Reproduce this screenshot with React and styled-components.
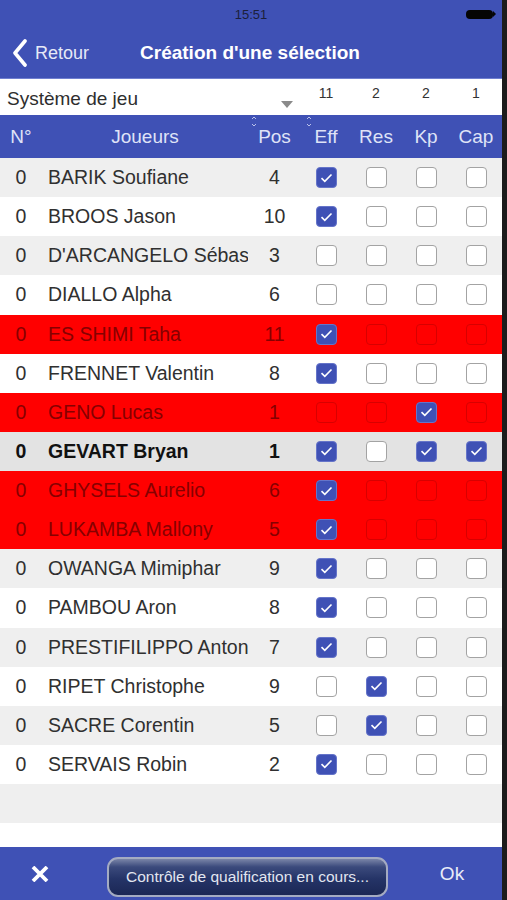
import React from 'react';
import styled, { createGlobalStyle, css } from 'styled-components';

const BLUE = '#3f51b5';

const players = [
  { name: 'BARIK Soufiane', pos: 4, checks: [1, 0, 0, 0] },
  { name: 'BROOS Jason', pos: 10, checks: [1, 0, 0, 0] },
  { name: "D'ARCANGELO Sébastien", pos: 3, checks: [0, 0, 0, 0] },
  { name: 'DIALLO Alpha', pos: 6, checks: [0, 0, 0, 0] },
  { name: 'ES SHIMI Taha', pos: 11, checks: [1, 0, 0, 0], blocked: true },
  { name: 'FRENNET Valentin', pos: 8, checks: [1, 0, 0, 0] },
  { name: 'GENO Lucas', pos: 1, checks: [0, 0, 1, 0], blocked: true },
  { name: 'GEVART Bryan', pos: 1, checks: [1, 0, 1, 1], selected: true },
  { name: 'GHYSELS Aurelio', pos: 6, checks: [1, 0, 0, 0], blocked: true },
  { name: 'LUKAMBA Mallony', pos: 5, checks: [1, 0, 0, 0], blocked: true },
  { name: 'OWANGA Mimiphar', pos: 9, checks: [1, 0, 0, 0] },
  { name: 'PAMBOU Aron', pos: 8, checks: [1, 0, 0, 0] },
  { name: 'PRESTIFILIPPO Antonio', pos: 7, checks: [1, 0, 0, 0] },
  { name: 'RIPET Christophe', pos: 9, checks: [0, 1, 0, 0] },
  { name: 'SACRE Corentin', pos: 5, checks: [0, 1, 0, 0] },
  { name: 'SERVAIS Robin', pos: 2, checks: [1, 0, 0, 0] },
];

const counts = [11, 2, 2, 1];
const columns = ['Eff', 'Res', 'Kp', 'Cap'];

const GlobalStyle = createGlobalStyle`
  body {
    margin: 0;
    font-family: 'Liberation Sans', Arial, sans-serif;
    background: #1c1c1c;
  }
`;

const GRID = '42px 206px 53px 50px 50px 50px 50px';

const Screen = styled.div`
  width: 502px;
  height: 900px;
  border-right: 5px solid #1c1c1c;
  display: flex;
  flex-direction: column;
  background: #ffffff;
  overflow: hidden;
`;

const StatusBar = styled.div`
  height: 28px;
  background: ${BLUE};
  display: grid;
  grid-template-columns: 1fr auto 1fr;
  align-items: center;
`;

const Clock = styled.span`
  grid-column: 2;
  font-size: 13px;
  color: #1b1f3a;
`;

const Battery = styled.div`
  justify-self: end;
  margin-right: 6px;
  display: flex;
  align-items: center;
`;

const BatteryBody = styled.div`
  width: 27px;
  height: 9px;
  border-radius: 4px;
  background: #050505;
`;

const BatteryNub = styled.div`
  width: 0;
  height: 0;
  border-top: 3px solid transparent;
  border-bottom: 3px solid transparent;
  border-left: 3px solid #050505;
`;

const NavBar = styled.div`
  height: 50px;
  background: ${BLUE};
  border-bottom: 1px solid #6f7fd0;
  display: grid;
  grid-template-columns: 1fr auto 1fr;
  align-items: center;
`;

const BackButton = styled.div`
  display: flex;
  align-items: center;
  gap: 6px;
  padding-left: 11px;
  color: #e6e9f7;
  font-size: 18px;
`;

const Title = styled.div`
  color: #ffffff;
  font-weight: bold;
  font-size: 19px;
  transform: translateX(-1px);
`;

const TableRow = styled.div`
  display: grid;
  grid-template-columns: ${GRID};
  align-items: center;
`;

const SelectorRow = styled(TableRow)`
  height: 36px;
  align-items: stretch;
`;

const Spinner = styled.div`
  grid-column: 1 / span 3;
  display: flex;
  justify-content: space-between;
  padding: 0 8px 0 7px;
`;

const SpinnerLabel = styled.span`
  align-self: center;
  font-size: 19px;
  color: #2e2e2e;
  margin-top: 3px;
`;

const SpinnerArrow = styled.span`
  align-self: flex-end;
  margin-bottom: 7px;
  width: 0;
  height: 0;
  border-left: 6px solid transparent;
  border-right: 6px solid transparent;
  border-top: 7px solid #8a8a8a;
`;

const Count = styled.span`
  text-align: center;
  font-size: 14px;
  color: #333;
  padding-top: 6px;
`;

const HeaderRow = styled(TableRow)`
  height: 43px;
  background: ${BLUE};
  color: #dfe3f7;
  font-size: 19px;
`;

const HeaderCell = styled.span`
  position: relative;
  text-align: center;
  line-height: 43px;
`;

const SortMark = styled.svg`
  position: absolute;
  top: 1px;
  left: ${(p) => p.$left}px;
`;

const Body = styled.div`
  flex: 1;
  display: flex;
  flex-direction: column;
`;

const rowBackground = (p) => {
  if (p.$blocked) return '#ff0000';
  if (p.$selected) return '#e3e3e3';
  return p.$even ? '#efefef' : '#ffffff';
};

const PlayerRow = styled(TableRow)`
  height: 39.125px;
  background: ${rowBackground};
  font-size: 19.5px;
  color: ${(p) => (p.$blocked ? '#860000' : '#303030')};
  font-weight: ${(p) => (p.$selected ? 'bold' : 'normal')};
  ${(p) => p.$selected && css`color: #111;`}
`;

const FillerRow = styled.div`
  height: 39px;
  background: #efefef;
`;

const Cell = styled.span`
  text-align: center;
`;

const NameCell = styled.span`
  padding-left: 6px;
  white-space: nowrap;
  overflow: hidden;
`;

const Box = styled.span`
  justify-self: center;
  box-sizing: border-box;
  width: 21px;
  height: 21px;
  border-radius: 4px;
  display: flex;
  align-items: center;
  justify-content: center;
  ${(p) =>
    p.$checked
      ? css`
          background: ${BLUE};
          border: 1px solid #6574c9;
        `
      : css`
          background: ${p.$blocked ? 'transparent' : '#ffffff'};
          border: 1.5px solid ${p.$blocked ? '#d80000' : '#a3a3a3'};
        `}
`;

const Footer = styled.div`
  height: 53px;
  background: ${BLUE};
  display: grid;
  grid-template-columns: 80px 1fr 90px;
  align-items: start;
`;

const FooterIcon = styled.div`
  height: 53px;
  display: flex;
  align-items: center;
  justify-content: center;
  padding-top: 1px;
  box-sizing: border-box;
`;

const StatusButton = styled.div`
  margin: 10px 24px 0 27px;
  height: 40px;
  box-sizing: border-box;
  border: 2px solid #a4abc2;
  border-radius: 11px;
  background: linear-gradient(
    to bottom,
    #7a85a8 0%,
    #3b4a7c 22%,
    #253467 55%,
    #1b2755 100%
  );
  display: flex;
  align-items: center;
  justify-content: center;
  color: #e2e6f0;
  font-size: 15.5px;
  padding-bottom: 1px;
`;

const OkButton = styled.div`
  height: 53px;
  display: flex;
  align-items: center;
  justify-content: center;
  color: #e9ecf8;
  font-size: 19px;
  margin-right: 10px;
`;

const CheckMark = () => (
  <svg width="13" height="10" viewBox="0 0 13 10">
    <path d="M1.5 5.2 L4.8 8.3 L11.5 1.5" fill="none" stroke="#ffffff" strokeWidth="1.6" />
  </svg>
);

const Chevron = () => (
  <svg width="18" height="28" viewBox="0 0 18 28">
    <path d="M14 2 L4 14 L14 26" fill="none" stroke="#ffffff" strokeWidth="3.6" strokeLinecap="round" strokeLinejoin="round" />
  </svg>
);

const Cross = () => (
  <svg width="18" height="16" viewBox="0 0 18 16">
    <path d="M2 1 L16 15 M16 1 L2 15" stroke="#ffffff" strokeWidth="3.8" />
  </svg>
);

const Sort = ({ left }) => (
  <SortMark $left={left} width="6" height="11" viewBox="0 0 6 11">
    <path d="M1 3 L3 1 L5 3 M1 8 L3 10 L5 8" fill="none" stroke="#c9cff0" strokeWidth="0.9" />
  </SortMark>
);

const App = () => (
  <>
    <GlobalStyle />
    <Screen>
      <StatusBar>
        <Clock>15:51</Clock>
        <Battery>
          <BatteryBody />
          <BatteryNub />
        </Battery>
      </StatusBar>
      <NavBar>
        <BackButton>
          <Chevron />
          <span>Retour</span>
        </BackButton>
        <Title>Création d'une sélection</Title>
      </NavBar>
      <SelectorRow>
        <Spinner>
          <SpinnerLabel>Système de jeu</SpinnerLabel>
          <SpinnerArrow />
        </Spinner>
        {counts.map((c, i) => (
          <Count key={i}>{c}</Count>
        ))}
      </SelectorRow>
      <HeaderRow>
        <HeaderCell>N°</HeaderCell>
        <HeaderCell>Joueurs</HeaderCell>
        <HeaderCell>
          <Sort left={3} />
          Pos
        </HeaderCell>
        {columns.map((c, i) => (
          <HeaderCell key={c}>
            {i === 0 && <Sort left={5} />}
            {c}
          </HeaderCell>
        ))}
      </HeaderRow>
      <Body>
        {players.map((p, i) => (
          <PlayerRow key={p.name} $even={i % 2 === 0} $blocked={p.blocked} $selected={p.selected}>
            <Cell>0</Cell>
            <NameCell>{p.name}</NameCell>
            <Cell>{p.pos}</Cell>
            {p.checks.map((c, j) => (
              <Box key={j} $checked={c} $blocked={p.blocked}>
                {c ? <CheckMark /> : null}
              </Box>
            ))}
          </PlayerRow>
        ))}
        <FillerRow />
      </Body>
      <Footer>
        <FooterIcon>
          <Cross />
        </FooterIcon>
        <StatusButton>Contrôle de qualification en cours...</StatusButton>
        <OkButton>Ok</OkButton>
      </Footer>
    </Screen>
  </>
);

export default App;
